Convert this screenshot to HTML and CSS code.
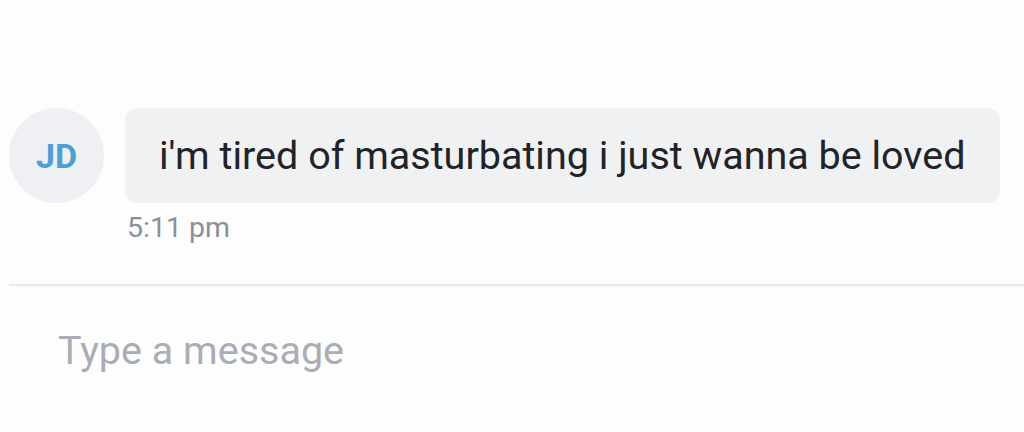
FILE: index.html
```html
<!DOCTYPE html>
<html lang="en">
<head>
<meta charset="UTF-8">
<title>Chat</title>
<link rel="stylesheet" href="styles.css">
</head>
<body>

<div class="thread">
  <div class="message">
    <div class="avatar">JD</div>
    <div class="body">
      <div class="bubble">i'm tired of masturbating i just wanna be loved</div>
      <div class="time">5:11 pm</div>
    </div>
  </div>
</div>

<div class="composer">
  <div class="placeholder">Type a message</div>
</div>

</body>
</html>
```

FILE: styles.css
```css
body {
  margin: 0;
  background: #fdfdfe;
  font-family: Roboto, "Noto Sans", sans-serif;
  width: 1024px;
  height: 432px;
  overflow: hidden;
}

.thread {
  padding: 108px 24px 0 9px;
  height: 176px;
}

.message {
  display: flex;
  gap: 21px;
}

.avatar {
  width: 95px;
  height: 95px;
  border-radius: 50%;
  background: #eff0f3;
  color: #4d9fd6;
  font-weight: 700;
  font-size: 34px;
  display: flex;
  align-items: center;
  justify-content: center;
  flex-shrink: 0;
}

.body {
  flex: 1;
}

.bubble {
  background: #f0f1f3;
  border-radius: 12px;
  height: 95px;
  padding: 0 34px;
  display: flex;
  align-items: center;
  color: #222326;
  font-size: 39.5px;
}

.time {
  margin-top: 8px;
  padding-left: 2px;
  font-size: 28.5px;
  color: #8b9099;
}

.composer {
  margin-left: 9px;
  border-top: 2px solid #e8e8f0;
  padding: 41px 0 0 49px;
}

.placeholder {
  font-size: 39.5px;
  color: #a9adb6;
}
```
